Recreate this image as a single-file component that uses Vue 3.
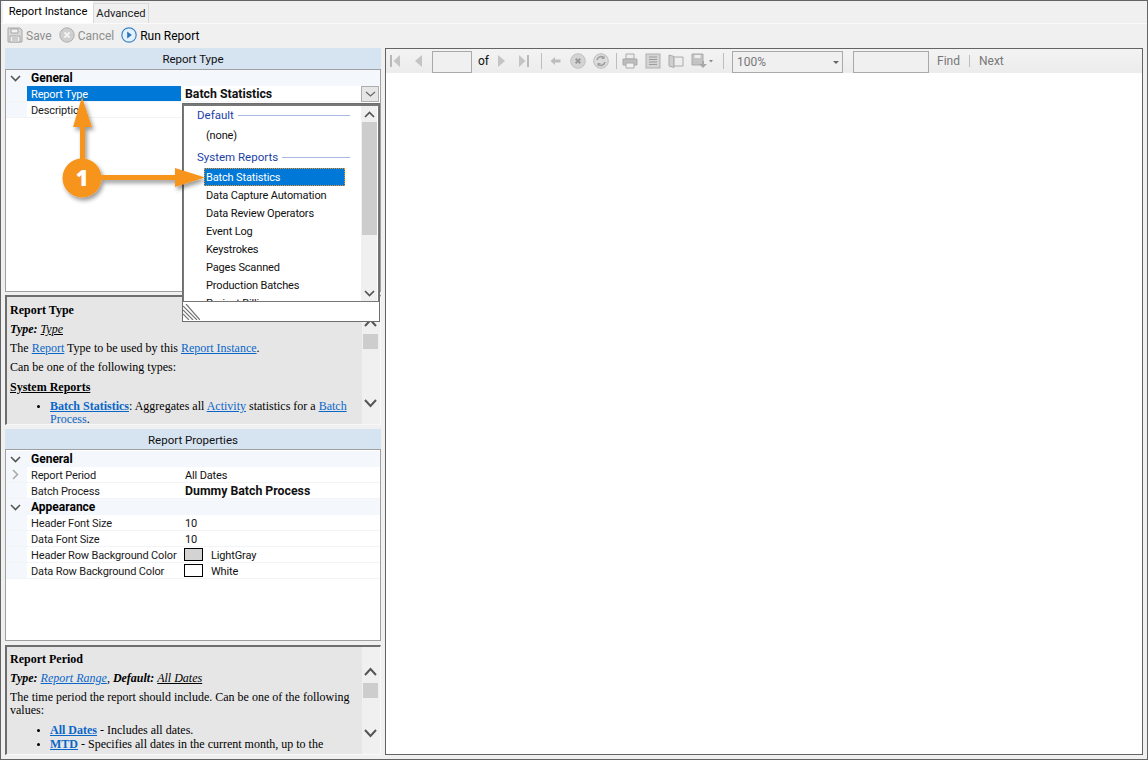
<script setup>
const typeRows = [
  { label: 'Report Type', value: 'Batch Statistics', bold: true, selected: true },
  { label: 'Description', value: '' }
]
const propGroups = [
  { name: 'General', rows: [
    { label: 'Report Period', value: 'All Dates', expand: true },
    { label: 'Batch Process', value: 'Dummy Batch Process', bold: true }
  ] },
  { name: 'Appearance', rows: [
    { label: 'Header Font Size', value: '10' },
    { label: 'Data Font Size', value: '10' },
    { label: 'Header Row Background Color', value: 'LightGray', swatch: '#d3d3d3' },
    { label: 'Data Row Background Color', value: 'White', swatch: '#ffffff' }
  ] }
]
const systemReports = ['Data Capture Automation', 'Data Review Operators', 'Event Log', 'Keystrokes', 'Pages Scanned', 'Production Batches', 'Project Billing']
</script>

<template>
  <div class="app">
    <div class="tabs">
      <div class="tab active">Report Instance</div>
      <div class="tab">Advanced</div>
    </div>
    <div class="toolbar">
      <span class="tool disabled">
        <svg width="16" height="16" viewBox="0 0 16 16"><path d="M1 1h12l2 2v12H1z" fill="#d8d8d8" stroke="#a8a8a8"/><path d="M4 2h7v4H4z" fill="#f2f2f2" stroke="#a8a8a8"/><path d="M3 9h10v6H3z" fill="#f2f2f2" stroke="#a8a8a8"/><path d="M5 11h6M5 13h6" stroke="#a8a8a8"/></svg>
        <span>Save</span>
      </span>
      <span class="tool disabled cancel">
        <svg width="16" height="16" viewBox="0 0 16 16"><circle cx="8" cy="8" r="7.200" fill="#cfcfcf" stroke="#b0b0b0"/><path d="M5.400 5.400l5.200 5.200M10.600 5.400l-5.200 5.200" stroke="#f4f4f4" stroke-width="2"/></svg>
        <span>Cancel</span>
      </span>
      <span class="tool run">
        <svg width="16" height="16" viewBox="0 0 16 16"><circle cx="8" cy="8" r="7.200" fill="#e4f0fb" stroke="#3a85c8" stroke-width="1.200"/><path d="M6.200 4.500l4.600 3.500-4.600 3.500z" fill="#2a74b8"/></svg>
        <span>Run Report</span>
      </span>
    </div>

    <div class="main">
      <div class="left">
        <div class="pane-title type-title">Report Type</div>
        <div class="grid type-grid">
          <div class="row cat">
            <span class="gutter"><svg width="11" height="7" viewBox="0 0 11 7"><path d="M1 1l4.500 4.500L10 1" fill="none" stroke="#555" stroke-width="1.600"/></svg></span>
            <span class="cat-name">General</span>
          </div>
          <div v-for="r in typeRows" :key="r.label" class="row">
            <span class="gutter"></span>
            <span class="label" :class="{ selected: r.selected }">{{ r.label }}</span>
            <span class="value" :class="{ bold: r.bold }">{{ r.value }}</span>
            <span v-if="r.selected" class="drop-btn"><svg width="11" height="6" viewBox="0 0 11 6"><path d="M1 1l4.500 4L10 1" fill="none" stroke="#666" stroke-width="1.100"/></svg></span>
          </div>
        </div>

        <div class="help help-type">
          <div class="help-body">
            <h4>Report Type</h4>
            <p><b><i>Type:</i></b> <i class="u">Type</i></p>
            <p>The <a>Report</a> Type to be used by this <a>Report Instance</a>.</p>
            <p>Can be one of the following types:</p>
            <h4 class="u sys">System Reports</h4>
            <ul>
              <li><a class="bold">Batch Statistics</a>: Aggregates all <a>Activity</a> statistics for a <a>Batch Process</a>.</li>
            </ul>
          </div>
          <div class="help-scroll one">
            <svg width="13" height="9" viewBox="0 0 13 9"><path d="M1 8l5.500-6L12 8" fill="none" stroke="#555" stroke-width="2"/></svg>
            <span class="help-thumb"></span>
            <svg class="down" width="13" height="9" viewBox="0 0 13 9"><path d="M1 1l5.500 6L12 1" fill="none" stroke="#555" stroke-width="2"/></svg>
          </div>
        </div>

        <div class="pane-title props-title">Report Properties</div>
        <div class="grid props-grid">
          <template v-for="g in propGroups" :key="g.name">
            <div class="row cat">
              <span class="gutter"><svg width="11" height="7" viewBox="0 0 11 7"><path d="M1 1l4.500 4.500L10 1" fill="none" stroke="#555" stroke-width="1.600"/></svg></span>
              <span class="cat-name">{{ g.name }}</span>
            </div>
            <div v-for="r in g.rows" :key="r.label" class="row">
              <span class="gutter"><svg v-if="r.expand" width="7" height="11" viewBox="0 0 7 11"><path d="M1 1l4.500 4.500L1 10" fill="none" stroke="#aaa" stroke-width="1.600"/></svg></span>
              <span class="label">{{ r.label }}</span>
              <span class="value" :class="{ bold: r.bold }">
                <i v-if="r.swatch" class="swatch" :style="{ background: r.swatch }"></i>{{ r.value }}
              </span>
            </div>
          </template>
        </div>

        <div class="help help-period">
          <div class="help-body">
            <h4>Report Period</h4>
            <p><b><i>Type:</i></b> <i><a>Report Range</a></i><i>,</i> <b><i>Default:</i></b> <i class="u">All Dates</i></p>
            <p>The time period the report should include. Can be one of the following values:</p>
            <ul>
              <li><a class="bold">All Dates</a> - Includes all dates.</li>
              <li><a class="bold">MTD</a> - Specifies all dates in the current month, up to the</li>
            </ul>
          </div>
          <div class="help-scroll two">
            <svg width="13" height="9" viewBox="0 0 13 9"><path d="M1 8l5.500-6L12 8" fill="none" stroke="#555" stroke-width="2"/></svg>
            <span class="help-thumb"></span>
            <svg class="down" width="13" height="9" viewBox="0 0 13 9"><path d="M1 1l5.500 6L12 1" fill="none" stroke="#555" stroke-width="2"/></svg>
          </div>
        </div>
      </div>

      <div class="viewer">
        <div class="viewer-bar">
          <svg class="ic" style="margin-left:3px" width="12" height="14" viewBox="0 0 12 14"><path d="M1 1h2v12H1z" fill="#b8b8b8"/><path d="M11 1v12L4.500 7z" fill="#c4c4c4"/></svg>
          <svg class="ic" style="margin-left:12px" width="10" height="14" viewBox="0 0 10 14"><path d="M9 1v12L2 7z" fill="#c4c4c4"/></svg>
          <span class="vinput page"></span>
          <span class="of">of</span>
          <svg class="ic" style="margin-left:9px" width="10" height="14" viewBox="0 0 10 14"><path d="M1 1v12l7-6z" fill="#c4c4c4"/></svg>
          <svg class="ic" style="margin-left:11px" width="12" height="14" viewBox="0 0 12 14"><path d="M1 1v12l6.500-6z" fill="#c4c4c4"/><path d="M9 1h2v12H9z" fill="#b8b8b8"/></svg>
          <span class="sep" style="margin-left:11px"></span>
          <svg class="ic" style="margin-left:8px" width="11" height="10" viewBox="0 0 11 10"><path d="M0.500 5L5 1v2.500h5.500v3H5V9z" fill="#bcbcbc"/></svg>
          <svg class="ic" style="margin-left:9px" width="16" height="16" viewBox="0 0 16 16"><circle cx="8" cy="8" r="7.300" fill="#d4d4d4" stroke="#c0c0c0"/><path d="M5.700 5.700l4.600 4.600M10.300 5.700l-4.600 4.600" stroke="#9a9a9a" stroke-width="2"/></svg>
          <svg class="ic" style="margin-left:7px" width="16" height="16" viewBox="0 0 16 16"><circle cx="8" cy="8" r="7.300" fill="#dcdcdc" stroke="#bcbcbc"/><path d="M4 7a4.200 4.200 0 0 1 7-2.200M12 9a4.200 4.200 0 0 1-7 2.200" fill="none" stroke="#a0a0a0" stroke-width="1.600"/><path d="M11.500 2.500v3.500H8zM4.500 13.500V10H8z" fill="#a0a0a0"/></svg>
          <span class="sep" style="margin-left:7px"></span>
          <svg class="ic" style="margin-left:5px" width="16" height="16" viewBox="0 0 16 16"><path d="M4 1h8v5H4z" fill="#eee" stroke="#aaa"/><path d="M1 6h14v6H1z" fill="#bdbdbd" stroke="#aaa"/><path d="M4 10h8v5H4z" fill="#f2f2f2" stroke="#aaa"/></svg>
          <svg class="ic" style="margin-left:7px" width="16" height="16" viewBox="0 0 16 16"><rect x="1" y="1" width="14" height="14" fill="#d4d4d4" stroke="#b0b0b0"/><path d="M4 4h8M4 6.500h8M4 9h8M4 11.500h8" stroke="#9c9c9c"/></svg>
          <svg class="ic" style="margin-left:7px" width="16" height="14" viewBox="0 0 16 14"><path d="M1 1l5 1.500v11L1 12z" fill="#cfcfcf" stroke="#aaa"/><path d="M6 3h9v9H6z" fill="#eee" stroke="#aaa"/></svg>
          <svg class="ic" style="margin-left:7px" width="22" height="16" viewBox="0 0 22 16"><path d="M1 1h11v11H1z" fill="#c4c4c4" stroke="#aaa"/><path d="M3.500 2h6v3h-6z" fill="#eee"/><path d="M8 11h3V8h2v3h3l-4 4z" fill="#a8a8a8"/><path d="M18 7h4l-2 2.500z" fill="#888"/></svg>
          <span class="sep" style="margin-left:10px"></span>
          <span class="vinput zoom">100%<i class="caret"></i></span>
          <span class="vinput find"></span>
          <span class="link find-link">Find</span>
          <span class="sep small"></span>
          <span class="link">Next</span>
        </div>
      </div>
    </div>

    <div class="popup">
      <div class="popup-list">
        <div class="items">
          <div class="group"><span>Default</span><i></i></div>
          <div class="item none">(none)</div>
          <div class="group second"><span>System Reports</span><i></i></div>
          <div class="item sel">Batch Statistics</div>
          <div v-for="s in systemReports" :key="s" class="item">{{ s }}</div>
        </div>
        <div class="pop-scroll">
          <svg width="11" height="7" viewBox="0 0 11 7"><path d="M1 6l4.500-4.500L10 6" fill="none" stroke="#555" stroke-width="1.700"/></svg>
          <span class="pop-thumb"></span>
          <svg class="down" width="11" height="7" viewBox="0 0 11 7"><path d="M1 1l4.500 4.500L10 1" fill="none" stroke="#555" stroke-width="1.700"/></svg>
        </div>
      </div>
      <div class="grip">
        <svg width="17" height="16" viewBox="0 0 17 16"><path d="M0 2l14 14M0 6l10 10M0 10l6 6M3 0l14 16" stroke="#777" stroke-width="1.200" fill="none"/></svg>
      </div>
    </div>

    <svg class="callout" width="180" height="120" viewBox="0 0 180 120">
      <defs>
        <filter id="sh" x="-20%" y="-20%" width="150%" height="150%">
          <feDropShadow dx="2" dy="3" stdDeviation="2" flood-color="#000" flood-opacity="0.4"/>
        </filter>
      </defs>
      <g filter="url(#sh)" fill="#f7941d">
        <path d="M29 87V36H22L31 6L41 36H34V87z"/>
        <path d="M50 84H124V77L154 86.500L124 96V89H50z"/>
        <circle cx="31" cy="87" r="19.500"/>
      </g>
      <text x="31" y="95" text-anchor="middle" class="num">1</text>
    </svg>
  </div>
</template>

<style>
html, body { margin: 0; background: #f0f0f0; }
</style>

<style scoped>
.app {
  position: relative;
  width: 1148px;
  height: 760px;
  box-sizing: border-box;
  border: 1px solid #646464;
  background: #f0f0f0;
  font-family: Roboto, "Open Sans", sans-serif;
  font-size: 11px;
  letter-spacing: -0.15px;
  color: #000;
  overflow: hidden;
}
.tabs { display: flex; height: 22px; padding-left: 2px; align-items: flex-end; }
.tab {
  width: 56px;
  height: 20px;
  line-height: 20px;
  text-align: center;
  box-sizing: border-box;
  border: 1px solid #d9d9d9;
  border-bottom: none;
  background: #f0f0f0;
  color: #222;
  font-size: 11.200px;
  letter-spacing: 0;
}
.tab.active {
  width: 90px;
  height: 22px;
  line-height: 19px;
  background: #fff;
  border-color: #fff;
  color: #000;
}
.toolbar {
  display: flex;
  align-items: center;
  height: 23px;
  padding-left: 6px;
  background: #f0f0f0;
  border-top: 1px solid #fafafa;
  box-sizing: border-box;
  color: #000;
  font-size: 12px;
  letter-spacing: 0;
}
.tool { display: inline-flex; align-items: center; gap: 3px; }
.tool span { padding-top: 2px; }
.tool.disabled { color: #8e8e8e; }
.tool.cancel { margin-left: 7px; }
.tool.run { margin-left: 7px; }
.main { display: flex; gap: 4px; padding: 2px 4px 0 4px; }
.left { width: 376px; display: flex; flex-direction: column; }
.pane-title {
  background: #d6e3f1;
  text-align: center;
  box-sizing: border-box;
  color: #111;
  font-size: 11.500px;
  letter-spacing: 0;
}
.type-title { height: 21px; line-height: 23px; }
.props-title { height: 20px; line-height: 23px; margin-top: 4px; }
.grid {
  background: #fff;
  border: 1px solid #a0a0a0;
  box-sizing: border-box;
}
.type-grid { height: 223px; }
.props-grid { height: 192px; padding-top: 1px; }
.row { display: flex; height: 16px; line-height: 17px; background: #fff; position: relative; border-bottom: 1px solid #f2f4f8; box-sizing: border-box; }
.gutter {
  width: 21px;
  flex: none;
  background: #f4f7fc;
  display: flex;
  align-items: center;
  justify-content: center;
}
.gutter svg { margin-left: -2px; }
.row.cat { background: #f4f7fc; border-bottom: none; }
.cat-name { font-weight: 700; margin-left: 4px; font-size: 12px; letter-spacing: 0; }
.label { width: 154px; flex: none; padding-left: 4px; box-sizing: border-box; white-space: nowrap; overflow: hidden; color: #1a1a1a; }
.label.selected { background: #0078d7; color: #fff; }
.value { margin-left: 4px; flex: 1; display: flex; align-items: center; white-space: nowrap; color: #111; padding-top: 1px; }
.value.bold { font-size: 12.300px; letter-spacing: 0; }
.bold { font-weight: 700; }
.swatch { display: block; width: 19px; height: 13px; border: 1px solid #000; box-sizing: border-box; margin: -1px 8px 0 -1px; }
.drop-btn {
  position: absolute;
  right: 1px;
  top: 0;
  width: 16px;
  height: 14px;
  background: #e6e6e6;
  border: 1px solid #adadad;
  display: flex;
  align-items: center;
  justify-content: center;
}
.help {
  display: flex;
  box-sizing: border-box;
  border: 1px solid #f8f8f8;
  border-top: 2px solid #6e6e6e;
  border-left: 2px solid #6e6e6e;
  background: #e6e6e6;
  font-family: "Liberation Serif", "Times New Roman", serif;
  font-size: 12px;
  letter-spacing: 0;
  overflow: hidden;
}
.help-type { height: 130px; margin-top: 3px; }
.help-period { height: 110px; margin-top: 4px; }
.help-body { width: 355px; flex: none; padding: 6px 6px 0 3px; box-sizing: border-box; line-height: 13px; overflow: hidden; }
.help-type .help-body { height: 127px; padding-top: 7px; }
.help-period .help-body { height: 104px; }
.help h4 { margin: 0 0 6px; font-size: 12px; line-height: 13px; font-weight: 700; }
.help h4.sys { margin-top: 7px; margin-bottom: 5px; }
.help p { margin: 0 0 6px; }
.help ul { margin: 0; padding: 1px 0 0 40px; }
.help li { line-height: 13px; margin-bottom: 1px; }
.help li::marker { font-size: 10px; }
.u { text-decoration: underline; }
.help a { color: #0a66c8; text-decoration: underline; }
.help-scroll {
  flex: 1;
  background: #f0f0f0;
  display: flex;
  flex-direction: column;
  align-items: center;
  padding-right: 1px;
}
.help-scroll.one { padding-top: 21px; }
.help-scroll.two { padding-top: 20px; }
.help-thumb { width: 15px; height: 15px; background: #cdcdcd; margin-top: 7px; }
.help-scroll.one .down { margin-top: 50px; }
.help-scroll.two .down { margin-top: 31px; }

.viewer { width: 758px; height: 707px; box-sizing: border-box; border: 1px solid #646464; background: #fff; }
.viewer-bar {
  display: flex;
  align-items: center;
  height: 24px;
  background: linear-gradient(#f3f3f3, #ececec);
  color: #000;
  font-size: 12px;
  letter-spacing: 0;
}
.ic { flex: none; }
.vinput {
  box-sizing: border-box;
  height: 22px;
  border: 1px solid #a9a9a9;
  background: #f0f0f0;
  display: flex;
  align-items: center;
  position: relative;
  top: 1px;
  flex: none;
}
.page { width: 40px; margin-left: 9px; }
.of { margin-left: 6px; width: 10px; color: #111; }
.sep { width: 1px; height: 16px; background: #bdbdbd; flex: none; }
.sep.small { height: 12px; margin: 0 9px; }
.zoom { width: 111px; margin-left: 8px; padding-left: 4px; color: #777; }
.caret { position: absolute; right: 3px; top: 9px; width: 0; height: 0; border: 3px solid transparent; border-top: 3px solid #666; border-bottom: none; }
.find { width: 76px; margin-left: 10px; }
.link { color: #777; }
.find-link { margin-left: 8px; }

.popup {
  position: absolute;
  left: 181px;
  top: 102px;
  width: 198px;
  height: 219px;
  box-sizing: border-box;
  border: 1px solid #6e6e6e;
  background: #fff;
}
.popup-list { display: flex; height: 198px; border: 1px solid #777; border-top-width: 2px; box-sizing: border-box; overflow: hidden; background: #fff; }
.items { width: 176px; flex: none; }
.group { display: flex; align-items: center; height: 18px; color: #1c3fa8; padding: 0 10px 0 13px; font-size: 11.500px; letter-spacing: 0; }
.group span { white-space: nowrap; }
.group i { flex: 1; height: 1px; background: #aab8e4; margin-left: 4px; }
.group.second { margin-top: 4px; }
.item { height: 18px; line-height: 20px; padding-left: 22px; white-space: nowrap; color: #111; }
.item.none { margin-top: 2px; }
.item.sel {
  margin: 2px 15px 0 20px;
  padding-left: 2px;
  background: #0078d7;
  color: #fff;
  box-sizing: border-box;
  outline: 1px dotted #f7941d;
  outline-offset: -1px;
}
.pop-scroll { width: 16px; flex: none; background: #f0f0f0; display: flex; flex-direction: column; align-items: center; padding-top: 5px; margin-left: 1px; }
.pop-thumb { width: 15px; height: 113px; background: #cdcdcd; margin-top: 4px; }
.pop-scroll .down { margin-top: 55px; }
.grip { height: 18px; overflow: hidden; }
.grip svg { display: block; margin-top: 2px; }

.callout { position: absolute; left: 50px; top: 90px; pointer-events: none; }
.num { font: 800 22px "Open Sans", sans-serif; fill: #fff; }
</style>
